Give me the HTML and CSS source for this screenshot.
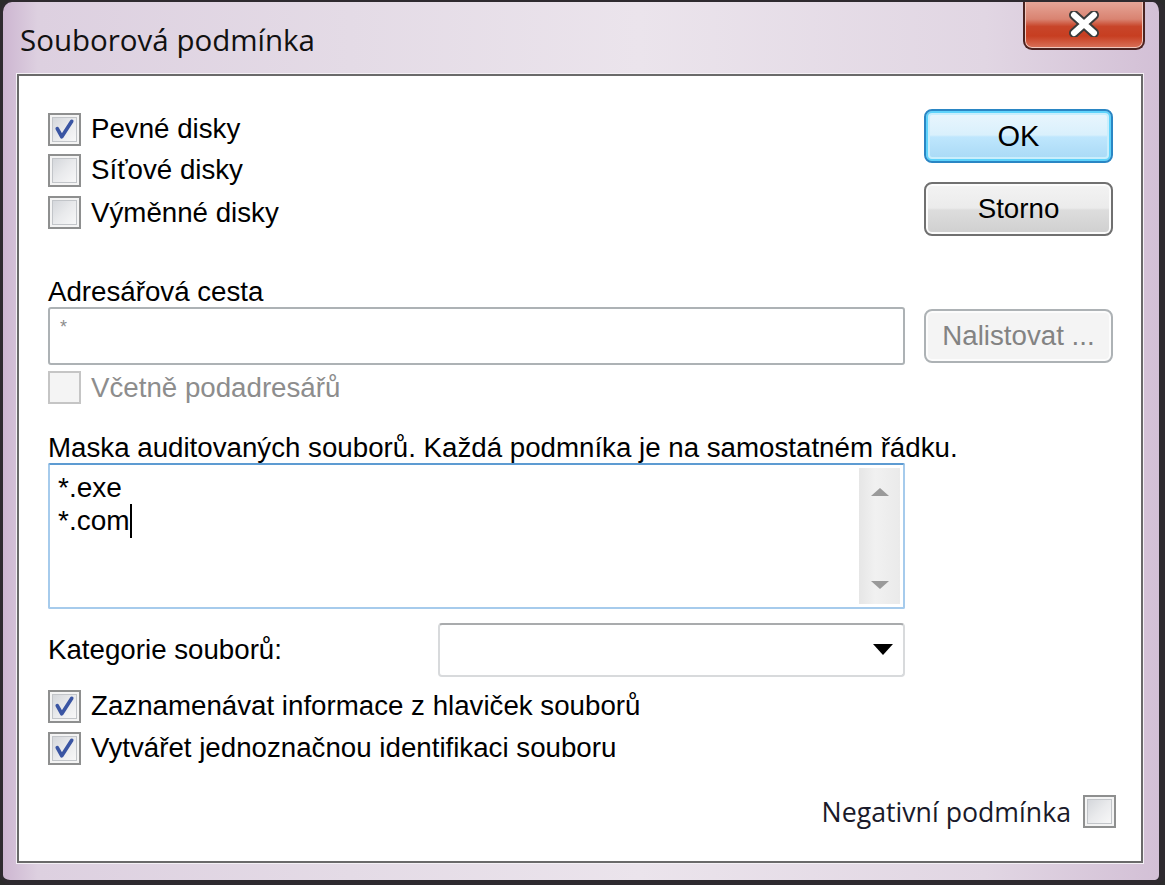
FILE: index.html
```html
<!DOCTYPE html>
<html lang="cs">
<head>
  <meta charset="UTF-8" />
  <title>Souborová podmínka</title>
  <link rel="stylesheet" href="styles.css">
</head>
<body>
  <div class="window">
    <div class="titlebar">
      <span class="title">Souborová podmínka</span>
      <button class="close-btn" aria-label="Zavřít">
        <svg width="32" height="26" viewBox="0 0 32 26">
          <path d="M6 4 L26 22 M26 4 L6 22" stroke="#3b3b3b" stroke-width="10" stroke-linecap="round" />
          <path d="M6 4 L26 22 M26 4 L6 22" stroke="#ffffff" stroke-width="6" stroke-linecap="round" />
        </svg>
      </button>
    </div>

    <div class="client">
      <div class="top">
        <div class="drives">
          <label class="check"><span class="box"><svg viewBox="0 0 32 32"><path d="M8 15 L13 24 L24 7" /></svg></span>Pevné disky</label>
          <label class="check"><span class="box"></span>Síťové disky</label>
          <label class="check"><span class="box"></span>Výměnné disky</label>
        </div>
        <div class="actions">
          <button class="btn default">OK</button>
          <button class="btn">Storno</button>
        </div>
      </div>

      <div class="field-label path-label">Adresářová cesta</div>
      <div class="path-row">
        <div class="edit disabled">*</div>
        <button class="btn disabled">Nalistovat ...</button>
      </div>
      <label class="check disabled"><span class="box"></span>Včetně podadresářů</label>

      <div class="field-label mask-label">Maska auditovaných souborů. Každá podmníka je na samostatném řádku.</div>
      <div class="memo">
        <div class="memo-text">
          <div>*.exe</div>
          <div>*.com<span class="caret"></span></div>
        </div>
        <div class="scrollbar">
          <svg width="20" height="10" viewBox="0 0 20 10"><path d="M1 9 L10 1 L19 9 Z" /></svg>
          <svg width="20" height="10" viewBox="0 0 20 10"><path d="M1 1 L10 9 L19 1 Z" /></svg>
        </div>
      </div>

      <div class="category-row">
        <span>Kategorie souborů:</span>
        <div class="combo">
          <svg width="20" height="12" viewBox="0 0 20 12"><path d="M0 0 L20 0 L10 11 Z" /></svg>
        </div>
      </div>

      <div class="options">
        <label class="check"><span class="box"><svg viewBox="0 0 32 32"><path d="M8 15 L13 24 L24 7" /></svg></span>Zaznamenávat informace z hlaviček souborů</label>
        <label class="check"><span class="box"><svg viewBox="0 0 32 32"><path d="M8 15 L13 24 L24 7" /></svg></span>Vytvářet jednoznačnou identifikaci souboru</label>
      </div>

      <div class="negative-row">
        <label class="check negative">Negativní podmínka<span class="box"></span></label>
      </div>
    </div>
  </div>
</body>
</html>
```

FILE: styles.css
```css
body {
  margin: 0;
  background: #2b2b2b;
  font-family: "Liberation Sans", Arial, sans-serif;
}
.window {
  width: 1165px;
  height: 885px;
  box-sizing: border-box;
  border-style: solid;
  border-color: #2e2a2f;
  border-width: 2px 6px 5px 3px;
  border-radius: 12px 12px 10px 10px;
  background: linear-gradient(90deg, #cdb6d1 0%, #ddd0e0 3%, #e4dbe6 30%, #ebe4ec 55%, #e1d6e3 85%, #d3c0d6 100%);
  display: flex;
  flex-direction: column;
  overflow: hidden;
}
.titlebar {
  height: 72px;
  flex: none;
  display: flex;
  justify-content: space-between;
  align-items: flex-start;
  padding: 0 14px 0 17px;
}
.title {
  font-family: "Open Sans", "Noto Sans", sans-serif;
  font-size: 29.5px;
  line-height: 30px;
  margin-top: 23px;
  color: #111;
}
.close-btn {
  width: 122px;
  height: 50px;
  margin-top: -2px;
  border: 2px solid #4a2320;
  border-top: none;
  border-radius: 0 0 9px 9px;
  background: linear-gradient(#e7a99c 0%, #d98371 40%, #c8452a 55%, #c73e21 75%, #d9725a 100%);
  box-shadow: inset 0 0 0 1px #f1c7bd;
  display: flex;
  align-items: center;
  justify-content: center;
  padding: 0;
}
.client {
  margin-left: 14px;
  width: 1126px;
  height: 789px;
  box-sizing: border-box;
  border: 2px solid #6a6a6a;
  box-shadow: 0 0 0 1px #f4f0f5;
  background: #fff;
  padding: 32px 28px 0 29px;
  font-size: 27.7px;
  color: #000;
}
.top {
  display: flex;
  justify-content: space-between;
  height: 129px;
}
.drives {
  display: flex;
  flex-direction: column;
}
.check {
  height: 43px;
  display: flex;
  align-items: center;
  gap: 10px;
  white-space: nowrap;
}
.box {
  width: 33px;
  height: 33px;
  flex: none;
  box-sizing: border-box;
  border: 2px solid #8e8f8f;
  background: linear-gradient(135deg, #cfd2d7 0%, #e9eaec 50%, #fbfbfb 100%);
  box-shadow: inset 0 0 0 2px #f4f4f4, inset 0 0 0 3px #c2c5c9;
  display: flex;
}
.box svg {
  width: 100%;
  height: 100%;
}
.box path {
  fill: none;
  stroke: #3a55a3;
  stroke-width: 4;
  stroke-linecap: round;
  stroke-linejoin: round;
}
.drives .check {
  margin-top: -3px;
  margin-bottom: 3px;
}
.drives .check:first-child {
  margin-top: 0;
  margin-bottom: 2px;
}
.actions {
  display: flex;
  flex-direction: column;
  gap: 19px;
  padding-top: 1px;
}
.btn {
  width: 189px;
  height: 54px;
  box-sizing: border-box;
  border: 2px solid #707070;
  border-radius: 8px;
  background: linear-gradient(#f3f3f3 0%, #ebebeb 48%, #dddddd 52%, #cfcfcf 100%);
  box-shadow: inset 0 0 0 2px #fbfbfb;
  font-family: "Liberation Sans", Arial, sans-serif;
  font-size: 27.7px;
  color: #000;
  padding: 0;
}
.btn.default {
  border-color: #2a86c4;
  background: linear-gradient(#eaf6fd 0%, #d9f0fc 48%, #bee6fd 52%, #a7d9f5 100%);
  box-shadow: inset 0 0 0 2px #5fd3fb, inset 0 0 0 4px #c9eefc;
  font-size: 29px;
}
.btn.disabled {
  border-color: #adb2b5;
  background: #f4f4f4;
  box-shadow: inset 0 0 0 2px #fcfcfc;
  color: #838383;
}
.field-label {
  line-height: 30px;
}
.path-label {
  margin-top: 40px;
}
.path-row {
  display: flex;
  justify-content: space-between;
  align-items: center;
}
.edit {
  width: 857px;
  height: 58px;
  box-sizing: border-box;
  border: 2px solid #adb2b5;
  border-radius: 3px;
  background: #fff;
  font-size: 18px;
  color: #8c8c8c;
  padding: 8px 10px;
}
.check.disabled {
  margin-top: 1px;
  color: #8d8d8d;
}
.check.disabled .box {
  border-color: #c5c5c5;
  background: #f4f4f4;
  box-shadow: none;
}
.mask-label {
  margin-top: 24px;
}
.memo {
  width: 857px;
  height: 146px;
  box-sizing: border-box;
  border: 2px solid #a6cbec;
  border-top-color: #5d9bd2;
  border-radius: 2px;
  display: flex;
  justify-content: space-between;
  padding: 3px 3px 3px 0;
}
.memo-text {
  padding: 4px 8px;
  font-size: 28px;
  line-height: 32px;
}
.caret {
  display: inline-block;
  width: 2px;
  height: 34px;
  background: #000;
  vertical-align: -8px;
}
.scrollbar {
  width: 41px;
  background: linear-gradient(90deg, #e6e6e6, #f1f1f1 40%, #eaeaea);
  display: flex;
  flex-direction: column;
  justify-content: space-between;
  align-items: center;
  padding: 19px 0 14px;
}
.scrollbar path {
  fill: #9a9a9a;
}
.category-row {
  margin-top: 14px;
  display: flex;
  justify-content: space-between;
  align-items: center;
  width: 857px;
}
.combo {
  width: 467px;
  height: 54px;
  box-sizing: border-box;
  border: 2px solid #d8dadc;
  border-top-color: #a9abad;
  border-radius: 4px;
  display: flex;
  justify-content: flex-end;
  align-items: center;
  padding-right: 10px;
}
.combo path {
  fill: #000;
}
.options {
  margin-top: 8px;
  display: flex;
  flex-direction: column;
}
.options .check {
  height: 42px;
}
.negative-row {
  margin-top: 21px;
  margin-right: -3px;
  display: flex;
  justify-content: flex-end;
}
.check.negative {
  gap: 12px;
  font-family: "Open Sans", "Noto Sans", sans-serif;
  font-size: 26.7px;
  color: #1a1a2a;
}
```
